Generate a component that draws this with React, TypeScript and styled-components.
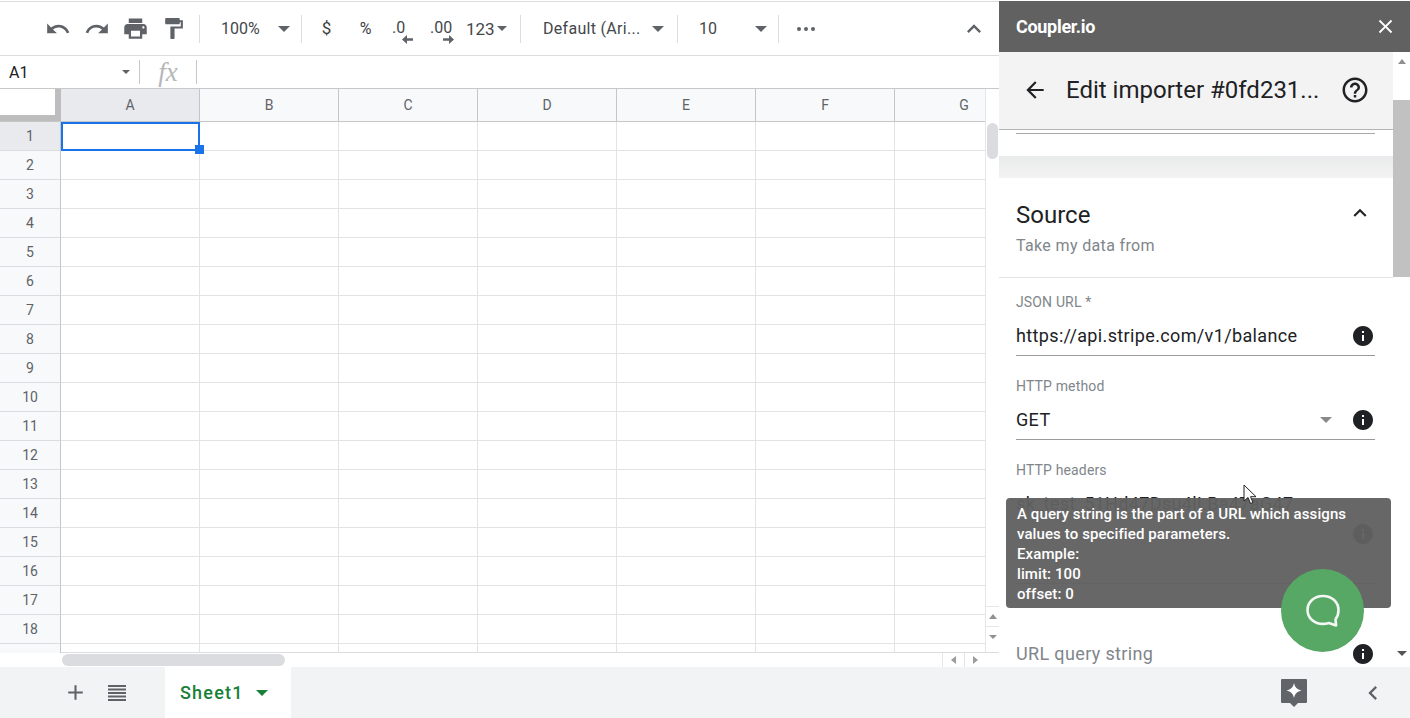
import React from "react";
import styled, { createGlobalStyle } from "styled-components";
import {
  MdUndo, MdRedo, MdPrint, MdFormatPaint, MdExpandLess, MdClose, MdArrowBack,
  MdHelpOutline, MdInfo, MdAdd, MdChevronLeft,
} from "react-icons/md";

const Global = createGlobalStyle`
  html, body { margin: 0; padding: 0; background: #fff; overflow: hidden; }
  body { font-family: Roboto, "Liberation Sans", sans-serif; }
  * { box-sizing: border-box; }
`;

const Page = styled.div`
  position: relative; width: 1410px; height: 718px; padding-top: 1px;
  display: flex; flex-direction: column; overflow: hidden; background: #fff;
`;
const Main = styled.div`display: flex; height: 666px;`;
const Left = styled.div`
  width: 999px; display: flex; flex-direction: column; border-top: 1px solid #dcdcdc;
`;

const Toolbar = styled.div`
  height: 54px; flex: none; display: flex; align-items: center; padding-left: 39px;
  border-bottom: 1px solid #dadce0; color: #5f6368; padding-right: 11px;
`;
const ToolButton = styled.div<{ $w: number }>`
  width: ${(p) => p.$w}px; height: 32px; flex: none; display: flex; align-items: center;
  justify-content: center; color: #5f6368;
`;
const ToolText = styled.div<{ $w: number; $pad?: number; $pr?: number; $size?: number; $ls?: number }>`
  width: ${(p) => p.$w}px; height: 32px; flex: none; display: flex; align-items: center;
  justify-content: space-between; padding-left: ${(p) => p.$pad ?? 0}px; padding-right: ${(p) => p.$pr ?? 11}px;
  font-size: ${(p) => p.$size ?? 16}px; color: #44474a; white-space: nowrap;
  letter-spacing: ${(p) => p.$ls ?? 0}px;
`;
const Sep = styled.div<{ $ml?: number }>`
  width: 1px; height: 28px; flex: none; background: #dadce0; margin-left: ${(p) => p.$ml ?? 0}px;
`;
const Caret = styled.span<{ $color?: string; $w?: number }>`
  width: 0; height: 0; flex: none;
  border-left: ${(p) => p.$w ?? 6}px solid transparent;
  border-right: ${(p) => p.$w ?? 6}px solid transparent;
  border-top: ${(p) => p.$w ?? 6}px solid ${(p) => p.$color ?? "#5f6368"};
`;
const Glyph = styled.span<{ $size?: number }>`
  font-size: ${(p) => p.$size ?? 16}px; color: #3c4043; line-height: 1;
`;
const Decimal = styled.div<{ $w: number }>`
  width: ${(p) => p.$w}px; display: flex; flex-direction: column; line-height: 16px;
  font-size: 16px; color: #44474a; margin-top: 7px;
  & svg { display: block; margin-top: -1px; align-self: flex-end; }
`;
const Dots = styled.div`
  display: flex; gap: 3px;
  & span { width: 4px; height: 4px; border-radius: 50%; background: #5f6368; }
`;
const Collapse = styled.div`margin-left: auto; display: flex; color: #5f6368;`;

const FormulaBar = styled.div`
  height: 33px; flex: none; display: flex; align-items: center; border-bottom: 1px solid #c8c8c8;
`;
const NameBox = styled.div`
  width: 139px; display: flex; align-items: center; justify-content: space-between;
  padding: 0 9px; font-size: 16px; color: #202124;
`;
const FormulaSep = styled.div`width: 1px; height: 24px; background: #c4c6c8; flex: none;`;
const Fx = styled.div`
  width: 56px; text-align: center; font: italic 27px "Liberation Serif", serif; color: #b5b7b9;
`;

const SheetRow = styled.div`flex: 1; display: flex; min-height: 0;`;
const Pane = styled.div`
  position: relative; width: 985px; height: 564px; overflow: hidden; display: flex; flex-direction: column;
`;
const HeaderRow = styled.div`display: flex; height: 33px; flex: none; border-bottom: 1px solid #c4c6c8;`;
const Corner = styled.div`
  width: 61px; flex: none; background: #fff; border-right: 6px solid #bdbdbd; border-bottom: 6px solid #bdbdbd;
`;
const ColHead = styled.div<{ $active?: boolean }>`
  width: 139px; flex: none; display: flex; align-items: center; justify-content: center;
  font-size: 14px; color: #5f6368; border-right: 1px solid #c4c6c8;
  background: ${(p) => (p.$active ? "#e8eaed" : "#f8f9fa")};
`;
const GridRow = styled.div`display: flex; height: 29px; flex: none;`;
const RowHead = styled.div<{ $active?: boolean }>`
  width: 61px; flex: none; display: flex; align-items: center; justify-content: center;
  font-size: 14px; color: #5f6368; border-right: 1px solid #c4c6c8; border-bottom: 1px solid #dadce0;
  background: ${(p) => (p.$active ? "#e8eaed" : "#f8f9fa")};
`;
const Cell = styled.div`
  width: 139px; flex: none; border-right: 1px solid #e2e3e3; border-bottom: 1px solid #e2e3e3;
`;
const Selection = styled.div`
  position: absolute; left: 61px; top: 33px; width: 139px; height: 29px; border: 2px solid #1a73e8;
  &::after {
    content: ""; position: absolute; right: -6px; bottom: -5px; width: 9px; height: 9px;
    background: #1a73e8; border: 0;
  }
`;
const VScroll = styled.div`
  width: 14px; flex: none; display: flex; flex-direction: column; align-items: center;
  border-left: 1px solid #e6e6e6; border-top: 0;
`;
const VThumb = styled.div`
  width: 11px; height: 36px; margin-top: 34px; border-radius: 6px; background: #dadce0;
`;
const ArrowBox = styled.div<{ $top?: number }>`
  width: 100%; height: 20px; display: flex; align-items: center; justify-content: center;
  border-top: 1px solid #e6e6e6; margin-top: ${(p) => p.$top ?? 0}px;
`;
const HScroll = styled.div`
  height: 15px; flex: none; display: flex; align-items: center; border-top: 1px solid #dadce0;
`;
const HThumb = styled.div`
  width: 223px; height: 12px; margin-left: 62px; border-radius: 6px; background: #dadce0;
`;
const HArrow = styled.div<{ $ml?: number }>`
  width: 22px; height: 14px; display: flex; align-items: center; justify-content: center;
  border-left: 1px solid #e6e6e6; margin-left: ${(p) => p.$ml ?? 0}px;
`;
const TriH = styled.span<{ $dir: "l" | "r" }>`
  width: 0; height: 0; border-top: 4px solid transparent; border-bottom: 4px solid transparent;
  ${(p) => (p.$dir === "l" ? "border-right: 5px solid #9a9c9e;" : "border-left: 5px solid #9a9c9e;")}
`;
const TriUp = styled.span`
  width: 0; height: 0; border-left: 4px solid transparent; border-right: 4px solid transparent;
  border-bottom: 5px solid #8f9193;
`;

const Side = styled.div`width: 411px; flex: none; display: flex; flex-direction: column;`;
const SideTop = styled.div`
  height: 51px; flex: none; background: #616161; color: #fff; display: flex; align-items: center;
  justify-content: space-between; padding: 0 13px 0 17px; font-size: 18px; font-weight: 700; letter-spacing: -0.3px;
`;
const SideBody = styled.div`flex: 1; min-height: 0; display: flex;`;
const SideContent = styled.div`width: 394px; flex: none; overflow: hidden; display: flex; flex-direction: column;`;
const SubHead = styled.div`
  height: 78px; flex: none; background: #f3f3f3; display: flex; align-items: center; padding: 0 23px 2px;
  border-bottom: 1px solid #b4b4b4; color: #202124; gap: 18px;
`;
const SubTitle = styled.div`flex: 1; font-size: 24px; white-space: nowrap; color: #202124;`;
const IconWrap = styled.span<{ $ml?: number }>`
  display: flex; flex: none; margin-left: ${(p) => p.$ml ?? 0}px;
`;
const RuleGap = styled.div`
  height: 23px; flex: none; margin: 3px 18px 0 17px; border-top: 1px solid #a8a8a8;
`;
const Band = styled.div`
  height: 22px; flex: none; background: linear-gradient(#e9eaeb, #f3f3f3);
`;
const SectionHead = styled.div`
  height: 100px; flex: none; padding: 23px 21px 0 17px; border-bottom: 1px solid #e3e3e3;
`;
const SectionTop = styled.div`display: flex; align-items: center; justify-content: space-between; height: 28px;`;
const SectionChevron = styled.span`display: flex; margin: -4px -1px 0 0;`;
const SectionTitle = styled.div`font-size: 24px; line-height: 28px; color: #202124;`;
const SectionSub = styled.div`
  font-size: 16px; line-height: 20px; margin-top: 7px; color: #80868b; letter-spacing: 0.35px;
`;
const Fields = styled.div`padding: 16px 18px 0 17px;`;
const Label = styled.div<{ $top?: number }>`
  font-size: 14px; line-height: 16px; color: #80868b; margin-top: ${(p) => p.$top ?? 0}px; letter-spacing: 0.15px;
`;
const ValueRow = styled.div<{ $h?: number; $plain?: boolean }>`
  height: ${(p) => p.$h ?? 46}px; padding: ${(p) => (p.$plain ? "0" : "11px 0 5px")}; display: flex; align-items: center;
  border-bottom: ${(p) => (p.$plain ? "0" : "1px solid #9a9a9a")};
`;
const Value = styled.div<{ $top?: boolean; $muted?: boolean }>`
  flex: 1; font-size: 18px; line-height: 28px; white-space: nowrap; letter-spacing: 0.36px;
  color: ${(p) => (p.$muted ? "#80868b" : "#202124")};
  align-self: ${(p) => (p.$top ? "flex-start" : "center")};
  margin-top: ${(p) => (p.$top ? "1px" : "0")};
`;
const UrlField = styled.div`margin-top: 56px;`;
const SideScroll = styled.div`width: 17px; flex: none; display: flex; flex-direction: column; align-items: center; position: relative;`;
const SideThumb = styled.div`width: 17px; height: 177px; margin-top: 35px; background: #c1c1c1;`;
const ScrollUp = styled.div`margin-top: 7px; height: 6px; display: flex;`;
const ScrollDown = styled.div`margin-top: auto; margin-bottom: 11px; display: flex;`;

const Tooltip = styled.div`
  position: absolute; left: 1006px; top: 498px; width: 385px; height: 110px; padding: 6px 11px;
  border-radius: 4px; background: rgba(97, 97, 97, 0.96); color: #fff; font-size: 15px;
  font-weight: 500; line-height: 20px; letter-spacing: 0.1px;
`;
const Fab = styled.div`
  position: absolute; left: 1281px; top: 569px; width: 83px; height: 83px; border-radius: 50%;
  background: #57a865; display: flex; align-items: center; justify-content: center;
`;
const Cursor = styled.svg`position: absolute; left: 1243px; top: 484px;`;

const Bottom = styled.div`
  flex: 1; background: #f1f3f4; display: flex; align-items: stretch; color: #5f6368;
`;
const BottomBtn = styled.div<{ $w: number; $ml?: number }>`
  width: ${(p) => p.$w}px; margin-left: ${(p) => p.$ml ?? 0}px; flex: none; display: flex;
  align-items: center; justify-content: center; color: #5f6368;
`;
const SheetTab = styled.div`
  width: 126px; margin-left: 27px; flex: none; background: #fff; display: flex; align-items: center;
  gap: 12px; padding-left: 15px; color: #188038; font-size: 18px; font-weight: 500; letter-spacing: 1.2px;
`;

const columns = ["A", "B", "C", "D", "E", "F", "G"];
const rows = Array.from({ length: 19 }, (_, i) => i + 1);

const ArrowLeftMini = () => (
  <svg width="11" height="9" viewBox="0 0 11 9"><path d="M0 4.500 5 0v3.200h6v2.600H5V9z" fill="#5f6368" /></svg>
);
const ArrowRightMini = () => (
  <svg width="11" height="9" viewBox="0 0 11 9"><path d="M11 4.500 6 0v3.200H0v2.600h6V9z" fill="#5f6368" /></svg>
);

export default function App() {
  return (
    <Page>
      <Global />
      <Main>
        <Left>
          <Toolbar>
            <ToolButton $w={38}><MdUndo size={26} /></ToolButton>
            <ToolButton $w={39}><MdRedo size={26} /></ToolButton>
            <ToolButton $w={38}><MdPrint size={27} /></ToolButton>
            <ToolButton $w={39}><MdFormatPaint size={25} /></ToolButton>
            <Sep $ml={6} />
            <ToolText $w={101} $pad={21}>100%<Caret /></ToolText>
            <Sep />
            <ToolButton $w={49}><Glyph $size={17}>$</Glyph></ToolButton>
            <ToolButton $w={29}><Glyph>%</Glyph></ToolButton>
            <ToolButton $w={45}><Decimal $w={21}>.0<ArrowLeftMini /></Decimal></ToolButton>
            <ToolButton $w={34}><Decimal $w={24}>.00<ArrowRightMini /></Decimal></ToolButton>
            <ToolText $w={61} $pad={7} $pr={13} $size={17}>123<Caret $w={5} /></ToolText>
            <Sep />
            <ToolText $w={156} $pad={22} $pr={13} $ls={0.3}>Default (Ari...<Caret /></ToolText>
            <Sep />
            <ToolText $w={100} $pad={21}>10<Caret /></ToolText>
            <Sep />
            <ToolButton $w={53}><Dots><span /><span /><span /></Dots></ToolButton>
            <Collapse><MdExpandLess size={28} /></Collapse>
          </Toolbar>
          <FormulaBar>
            <NameBox>A1<Caret $w={4} /></NameBox>
            <FormulaSep />
            <Fx>fx</Fx>
            <FormulaSep />
          </FormulaBar>
          <SheetRow>
            <Pane>
              <HeaderRow>
                <Corner />
                {columns.map((c, i) => <ColHead key={c} $active={i === 0}>{c}</ColHead>)}
              </HeaderRow>
              {rows.map((r) => (
                <GridRow key={r}>
                  <RowHead $active={r === 1}>{r < 19 ? r : ""}</RowHead>
                  {columns.map((c) => <Cell key={c} />)}
                </GridRow>
              ))}
              <Selection />
            </Pane>
            <VScroll>
              <VThumb />
              <ArrowBox $top={447}><TriUp /></ArrowBox>
              <ArrowBox><Caret $w={4} $color="#8f9193" /></ArrowBox>
            </VScroll>
          </SheetRow>
          <HScroll>
            <HThumb />
            <HArrow $ml={657}><TriH $dir="l" /></HArrow>
            <HArrow><TriH $dir="r" /></HArrow>
          </HScroll>
        </Left>
        <Side>
          <SideTop>Coupler.io<MdClose size={23} /></SideTop>
          <SideBody>
            <SideContent>
              <SubHead>
                <IconWrap><MdArrowBack size={26} /></IconWrap>
                <SubTitle>Edit importer #0fd231...</SubTitle>
                <IconWrap><MdHelpOutline size={30} /></IconWrap>
              </SubHead>
              <RuleGap />
              <Band />
              <SectionHead>
                <SectionTop>
                  <SectionTitle>Source</SectionTitle>
                  <SectionChevron><MdExpandLess size={26} color="#202124" /></SectionChevron>
                </SectionTop>
                <SectionSub>Take my data from</SectionSub>
              </SectionHead>
              <Fields>
                <Label>JSON URL *</Label>
                <ValueRow>
                  <Value>https://api.stripe.com/v1/balance</Value>
                  <MdInfo size={24} color="#202124" />
                </ValueRow>
                <Label $top={22}>HTTP method</Label>
                <ValueRow>
                  <Value>GET</Value>
                  <Caret $w={6} $color="#8a8a8a" />
                  <IconWrap $ml={19}><MdInfo size={24} color="#202124" /></IconWrap>
                </ValueRow>
                <Label $top={22}>HTTP headers</Label>
                <ValueRow $h={106}>
                  <Value $top>sk_test_51Hd47Dsu4lLBa47aG47</Value>
                  <MdInfo size={24} color="#202124" />
                </ValueRow>
                <UrlField>
                  <ValueRow $plain $h={28}>
                    <Value $muted>URL query string</Value>
                    <MdInfo size={24} color="#202124" />
                  </ValueRow>
                </UrlField>
              </Fields>
            </SideContent>
            <SideScroll>
              <ScrollUp><TriUp /></ScrollUp>
              <SideThumb />
              <ScrollDown><Caret $w={5} $color="#555" /></ScrollDown>
            </SideScroll>
          </SideBody>
        </Side>
      </Main>
      <Bottom>
        <BottomBtn $w={42} $ml={54}><MdAdd size={25} /></BottomBtn>
        <BottomBtn $w={42}>
          <svg width="18" height="16" viewBox="0 0 18 16" fill="#5f6368">
            <rect y="0" width="18" height="2" />
            <rect y="3.500" width="18" height="2" />
            <rect y="7" width="18" height="2" />
            <rect y="10.500" width="18" height="2" />
            <rect y="14" width="18" height="2" />
          </svg>
        </BottomBtn>
        <SheetTab>Sheet1<Caret $w={6} $color="#188038" /></SheetTab>
        <BottomBtn $w={40} $ml={983}>
          <svg width="28" height="30" viewBox="0 0 28 30">
            <path d="M2 1h24a1 1 0 0 1 1 1v22a1 1 0 0 1-1 1h-8l-4 4-4-4H2a1 1 0 0 1-1-1V2a1 1 0 0 1 1-1z" fill="#616468" />
            <path d="M14 5c1 4.500 3 6.500 7.500 7.500C17 13.500 15 15.500 14 20c-1-4.500-3-6.500-7.500-7.500C11 11.500 13 9.500 14 5z" fill="#fff" />
          </svg>
        </BottomBtn>
        <BottomBtn $w={39} $ml={39}><MdChevronLeft size={28} /></BottomBtn>
      </Bottom>
      <Tooltip>
        A query string is the part of a URL which assigns<br />
        values to specified parameters.<br />
        Example:<br />
        limit: 100<br />
        offset: 0
      </Tooltip>
      <Fab>
        <svg width="36" height="34" viewBox="0 0 36 34" fill="none">
          <path d="M18 2c8.800 0 15.500 6 15.500 14 0 3.500-1 6.800-3 9.300l.6 6.200-7.300-2.500c-1.900.6-3.800.9-5.800.9C9.200 29.900 2.500 24 2.500 16S9.200 2 18 2z" stroke="#f4f7f4" strokeWidth="2.600" strokeLinejoin="round" />
        </svg>
      </Fab>
      <Cursor width="14" height="22" viewBox="0 0 14 22">
        <path d="M1 1v16l4-3.500 2.500 6 2.500-1-2.500-5.800H13z" fill="#fff" stroke="#222" strokeWidth="1" />
      </Cursor>
    </Page>
  );
}
